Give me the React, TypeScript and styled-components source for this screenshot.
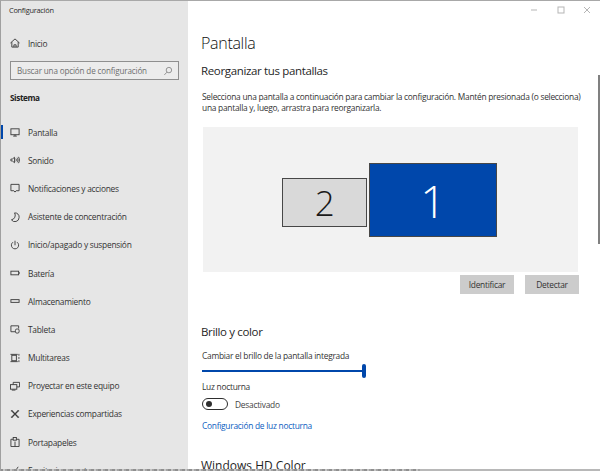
import React from "react";
import styled, { createGlobalStyle } from "styled-components";

const GlobalStyle = createGlobalStyle`
  html, body {
    margin: 0;
    padding: 0;
    background: #ffffff;
    overflow: hidden;
  }
  * {
    box-sizing: border-box;
  }
`;

const Win = styled.div`
  position: relative;
  width: 600px;
  height: 471px;
  display: flex;
  overflow: hidden;
  border-top: 1px solid #a8a8a8;
  border-left: 1px solid #a0a0a0;
  font-family: "Open Sans", "Noto Sans", sans-serif;
  letter-spacing: -0.26px;
  color: #1f1f1f;
`;

const Sidebar = styled.aside`
  width: 187px;
  flex-shrink: 0;
  background: #e6e6e6;
  display: flex;
  flex-direction: column;
  & > * {
    flex-shrink: 0;
  }
`;

const AppTitle = styled.div`
  height: 18px;
  padding: 3px 0 0 8px;
  font-size: 7.4px;
  line-height: 12px;
  color: #2b2b2b;
`;

const HomeRow = styled.div`
  height: 28px;
  margin-top: 10px;
  display: flex;
  align-items: center;
  padding-left: 9px;
  gap: 8px;
  font-size: 8.4px;
  color: #333;
`;

const SearchBox = styled.div`
  height: 19px;
  margin: 4px 9px 0 9px;
  border: 1.5px solid #8f8f8f;
  background: #ececec;
  display: flex;
  align-items: center;
  justify-content: space-between;
  padding: 0 5px 0 6px;
  font-size: 8.1px;
  letter-spacing: -0.15px;
  color: #6e6e6e;
`;

const SectionLabel = styled.div`
  height: 14px;
  margin: 11px 0 13px 9px;
  font-size: 8.2px;
  line-height: 14px;
  font-weight: 700;
  letter-spacing: -0.4px;
  color: #222;
`;

const NavItem = styled.div<{ $active?: boolean }>`
  position: relative;
  height: 28.2px;
  display: flex;
  align-items: center;
  gap: 8px;
  padding-left: 9px;
  font-size: 8.4px;
  color: #333;
  &::before {
    content: "";
    display: ${(p) => (p.$active ? "block" : "none")};
    position: absolute;
    left: -1px;
    top: 7px;
    width: 2.5px;
    height: 14px;
    background: #0047ab;
  }
`;

const IconSlot = styled.svg<{ $muted?: boolean }>`
  width: 10px;
  height: 10px;
  flex-shrink: 0;
  fill: none;
  stroke: ${(p) => (p.$muted ? "#8a8a8a" : "#3a3a3a")};
  stroke-width: 1;
`;

const Main = styled.main`
  flex: 1;
  min-width: 0;
  background: #ffffff;
  display: flex;
  flex-direction: column;
  padding: 0 21px 0 13px;
  & > * {
    flex-shrink: 0;
  }
`;

const WindowControls = styled.div`
  height: 18px;
  margin-right: -21px;
  padding-right: 9px;
  display: flex;
  justify-content: flex-end;
  align-items: center;
  gap: 18.5px;
`;

const WindowButton = styled.svg`
  width: 8px;
  height: 8px;
  fill: none;
  stroke: #b5b5b5;
  stroke-width: 1;
`;

const PageTitle = styled.h1`
  margin: 12px 0 0 0;
  height: 24px;
  font-size: 16px;
  line-height: 24px;
  font-weight: 300;
  letter-spacing: -0.3px;
  color: #111;
`;

const Heading = styled.h2<{ $top: number; $wide?: boolean }>`
  margin: ${(p) => p.$top}px 0 0 0;
  font-size: ${(p) => (p.$wide ? 12 : 11.5)}px;
  line-height: 17px;
  font-weight: 400;
  letter-spacing: ${(p) => (p.$wide ? 0 : -0.35)}px;
  color: #1f1f1f;
`;

const Description = styled.p`
  margin: 11.5px 0 0 1px;
  width: 380px;
  font-size: 8.4px;
  line-height: 11.5px;
  color: #333;
`;

const Arrangement = styled.div`
  margin: 13.5px 0 0 2px;
  width: 375px;
  height: 145px;
  background: #f2f2f2;
  display: flex;
  justify-content: center;
  align-items: flex-start;
  padding: 36px 2px 0 0;
  gap: 2px;
`;

const Monitor = styled.div<{ $primary?: boolean }>`
  width: ${(p) => (p.$primary ? 128 : 85)}px;
  height: ${(p) => (p.$primary ? 74 : 49)}px;
  margin-top: ${(p) => (p.$primary ? 0 : 15)}px;
  background: ${(p) => (p.$primary ? "#0047ab" : "#d9d9d9")};
  color: ${(p) => (p.$primary ? "#ffffff" : "#1a1a1a")};
  border: 1px solid #474747;
  display: flex;
  align-items: center;
  justify-content: center;
  font-size: ${(p) => (p.$primary ? 45 : 35)}px;
  font-weight: 300;
`;

const ButtonRow = styled.div`
  margin: 3px 0 0 0;
  width: 378px;
  display: flex;
  justify-content: flex-end;
  gap: 11px;
`;

const ActionButton = styled.button`
  width: 54px;
  height: 19px;
  padding: 0;
  border: 0;
  background: #cccccc;
  font-family: inherit;
  font-size: 8.4px;
  letter-spacing: -0.26px;
  color: #333;
`;

const FieldLabel = styled.div<{ $top: number }>`
  margin: ${(p) => p.$top}px 0 0 1px;
  font-size: 8.4px;
  line-height: 12px;
  color: #333;
`;

const SliderTrack = styled.div`
  position: relative;
  margin: 8px 0 0 1px;
  width: 163px;
  height: 2px;
  background: #0047ab;
`;

const SliderThumb = styled.div`
  position: absolute;
  right: -1px;
  top: -6px;
  width: 4px;
  height: 14px;
  border-radius: 2px;
  background: #0047ab;
`;

const ToggleRow = styled.div`
  margin: 5px 0 0 1px;
  display: flex;
  align-items: center;
  gap: 7px;
  font-size: 8.4px;
  color: #444;
`;

const Toggle = styled.div`
  width: 26px;
  height: 12px;
  border: 1.3px solid #2e2e2e;
  border-radius: 6px;
  display: flex;
  align-items: center;
  padding-left: 3px;
`;

const ToggleKnob = styled.div`
  width: 6px;
  height: 6px;
  border-radius: 50%;
  background: #2e2e2e;
`;

const Link = styled.a`
  margin: 10px 0 0 1px;
  font-size: 8.4px;
  line-height: 12px;
  color: #0a5cc0;
`;

const Scrollbar = styled.div`
  position: absolute;
  right: 0;
  top: 74px;
  width: 2px;
  height: 169px;
  background: #808080;
`;

const DesktopSliver = styled.div`
  position: absolute;
  left: -1px;
  top: 29px;
  width: 1px;
  height: 41px;
  background: #a9c9e6;
`;

const BottomEdge = styled.div`
  position: absolute;
  left: -1px;
  right: 0;
  bottom: 0;
  height: 2px;
  background: linear-gradient(90deg, transparent 0 70%, #b8b8b8 70%),
    repeating-linear-gradient(90deg, #8f8f8f 0 3px, #c4c4c4 3px 5px, #a4a4a4 5px 7px);
`;

const nav = [
  { label: "Pantalla", active: true, icon: <><rect x="1" y="2" width="9" height="6.5" /><path d="M3.5 10h4M5.5 8.5V10" /></> },
  { label: "Sonido", icon: <><path d="M1 4.5v2h1.5L5 8.5v-6L2.5 4.5z" /><path d="M6.5 4c.6.9.6 2.1 0 3M8 3c1 1.400 1 3.600 0 5M9.300 2c1.400 2 1.400 5 0 7" /></> },
  { label: "Notificaciones y acciones", icon: <path d="M1 1.500h9v7H6.800L5.500 10 4.200 8.500H1z" /> },
  { label: "Asistente de concentración", icon: <path d="M5 1a4.500 4.500 0 0 1 5 5.200A4.600 4.600 0 0 1 1.600 8.600 5 5 0 0 0 5 1z" /> },
  { label: "Inicio/apagado y suspensión", icon: <path d="M5.500 .8v5M3.300 2.400a4 4 0 1 0 4.400 0" /> },
  { label: "Batería", icon: <><rect x="1" y="3.500" width="8.500" height="4" /><path d="M10.500 4.800v1.400" /></> },
  { label: "Almacenamiento", icon: <rect x="1" y="4" width="9" height="3" /> },
  { label: "Tableta", icon: <><path d="M6 8.500H1v-6.500h8.500V5" /><rect x="6" y="5.500" width="4" height="4.500" rx="1.500" /></> },
  { label: "Multitareas", icon: <><rect x="2" y="2.500" width="5" height="6" /><path d="M.5 1.500h8M.5 9.500h8M9.800 1v2M9.800 4.500v2M9.800 8v2" /></> },
  { label: "Proyectar en este equipo", icon: <><path d="M3.500 4V1.500h7v5H7.500" /><rect x=".5" y="4" width="7" height="5" /><path d="M2 10h4" /></> },
  { label: "Experiencias compartidas", icon: <g strokeWidth="1.500"><path d="M2.500 2.500l6 6M8.500 2.500l-6 6" /><path d="M1 2h2M8 2h2M1 9h2M8 9h2" /></g> },
  { label: "Portapapeles", icon: <><path d="M1 2.500h2.500M7 2.500h3v8H1v-8M5.500 5v5.500" /><rect x="3.500" y=".5" width="3.500" height="3" /></> },
  { label: "Escritorio remoto", icon: <path d="M1.500 8l2 2L9 2" /> },
];

export default function App() {
  return (
    <Win>
      <GlobalStyle />
      <Sidebar>
        <AppTitle>Configuración</AppTitle>
        <HomeRow>
          <IconSlot viewBox="0 0 11 11">
            <path d="M.5 5.500L5.500 1l5 4.500M2 4.500V10h7V4.500M4.300 10V7.500h2.400V10" />
          </IconSlot>
          Inicio
        </HomeRow>
        <SearchBox>
          Buscar una opción de configuración
          <IconSlot $muted viewBox="0 0 11 11">
            <circle cx="6.500" cy="4.500" r="3" />
            <path d="M4.300 6.800L1.500 9.800" />
          </IconSlot>
        </SearchBox>
        <SectionLabel>Sistema</SectionLabel>
        {nav.map((item) => (
          <NavItem key={item.label} $active={item.active}>
            <IconSlot viewBox="0 0 11 11">{item.icon}</IconSlot>
            {item.label}
          </NavItem>
        ))}
      </Sidebar>
      <Main>
        <WindowControls>
          <WindowButton viewBox="0 0 8 8"><path d="M1 4h6" /></WindowButton>
          <WindowButton viewBox="0 0 8 8"><rect x="1" y="1" width="6" height="6" /></WindowButton>
          <WindowButton viewBox="0 0 8 8"><path d="M1 1l6 6M7 1L1 7" /></WindowButton>
        </WindowControls>
        <PageTitle>Pantalla</PageTitle>
        <Heading $top={7}>Reorganizar tus pantallas</Heading>
        <Description>
          Selecciona una pantalla a continuación para cambiar la configuración. Mantén presionada (o selecciona)
          una pantalla y, luego, arrastra para reorganizarla.
        </Description>
        <Arrangement>
          <Monitor>2</Monitor>
          <Monitor $primary>1</Monitor>
        </Arrangement>
        <ButtonRow>
          <ActionButton>Identificar</ActionButton>
          <ActionButton>Detectar</ActionButton>
        </ButtonRow>
        <Heading $top={29}>Brillo y color</Heading>
        <FieldLabel $top={10}>Cambiar el brillo de la pantalla integrada</FieldLabel>
        <SliderTrack>
          <SliderThumb />
        </SliderTrack>
        <FieldLabel $top={9}>Luz nocturna</FieldLabel>
        <ToggleRow>
          <Toggle>
            <ToggleKnob />
          </Toggle>
          Desactivado
        </ToggleRow>
        <Link>Configuración de luz nocturna</Link>
        <Heading $top={25} $wide>Windows HD Color</Heading>
      </Main>
      <DesktopSliver />
      <Scrollbar />
      <BottomEdge />
    </Win>
  );
}
